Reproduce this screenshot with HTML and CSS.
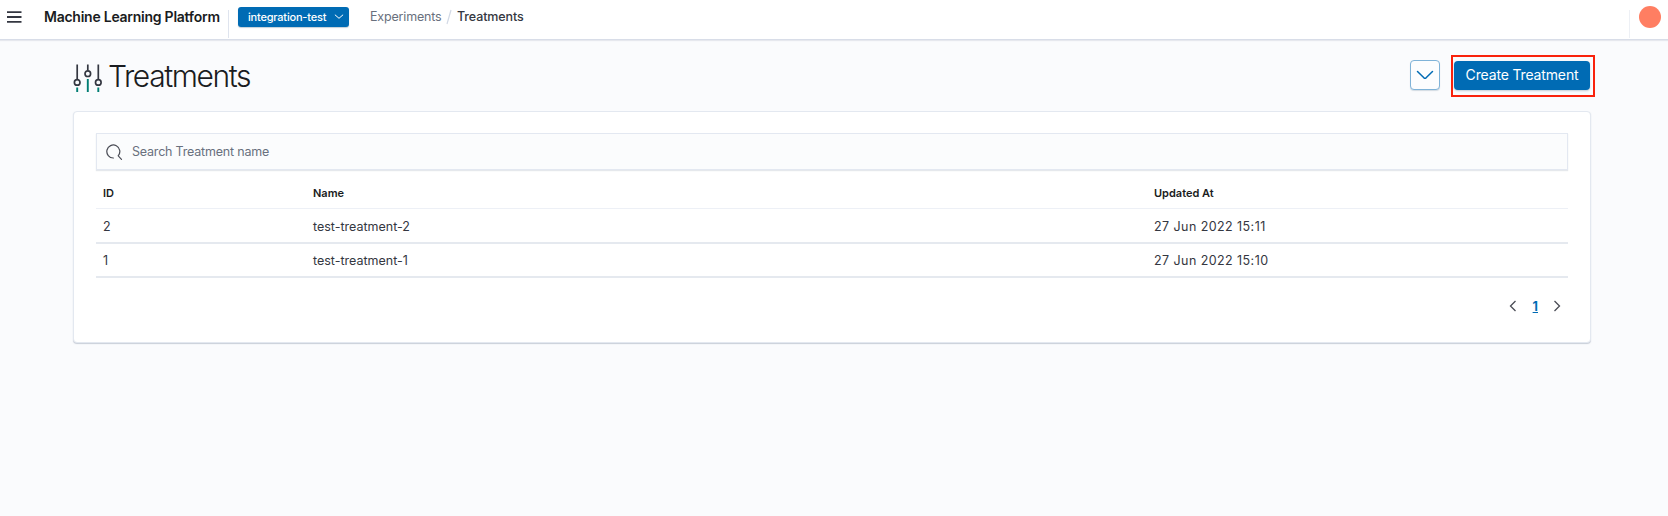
FILE: index.html
```html
<!DOCTYPE html>
<html lang="en">
<head>
<meta charset="utf-8">
<title>Treatments</title>
<link rel="stylesheet" href="styles.css">
</head>
<body>
<header class="topbar">
  <svg class="menu" width="16" height="14" viewBox="0 0 16 14" stroke="#343741" stroke-width="1.8"><path d="M1 2.2h14.5M1 7h14.5M1 11.8h14.5"/></svg>
  <span class="brand">Machine Learning Platform</span>
  <span class="divider divider-left"></span>
  <button class="project"><span class="project-name">integration-test</span>
    <svg class="project-arrow" width="10" height="6" viewBox="0 0 10 6" fill="none" stroke="#fff" stroke-linecap="round"><path d="M1.200 1L5 4.300 8.800 1"/></svg>
  </button>
  <nav class="crumbs">
    <span class="crumb">Experiments</span>
    <svg class="slash" width="6" height="16" viewBox="0 0 6 16" stroke="#d3dae6" stroke-width="1.2"><path d="M1 15L5 1"/></svg>
    <span class="crumb-current">Treatments</span>
  </nav>
  <span class="divider divider-right"></span>
  <span class="avatar"></span>
</header>
<main class="page">
  <div class="page-head">
    <svg class="logo" width="30" height="30" viewBox="0 0 30 30" fill="none" stroke="#343741" stroke-width="1.7">
      <path d="M4.200 1.500v15M14.800 1.500v6M25.300 1.500v15"/>
      <circle cx="4.200" cy="19.400" r="2.800"/><circle cx="14.800" cy="10.700" r="2.800"/><circle cx="25.300" cy="19.400" r="2.800"/>
      <path stroke="#017d73" stroke-width="1.900" d="M4.200 24.500v4.500M14.800 16v13M25.300 24.500v4.500"/>
    </svg>
    <h1 class="title">Treatments</h1>
    <button class="more"><svg width="18" height="10" viewBox="0 0 18 10" fill="none" stroke="#006bb4" stroke-width="1.500" stroke-linecap="round" stroke-linejoin="round"><path d="M1.500 1.500L7.900 7.800q1.100.9 2.200 0L16.500 1.500"/></svg></button>
    <div class="highlight"><button class="create">Create Treatment</button></div>
  </div>
  <section class="panel">
    <div class="search">
      <svg width="17" height="17" viewBox="0 0 17 17" fill="none" stroke="#4a4c55" stroke-width="1.200" stroke-linecap="round"><path d="M7.400 14A6.500 6.500 0 1 1 12.200 11.800L15.500 15.300"/></svg>
      <span class="placeholder">Search Treatment name</span>
    </div>
    <div class="row row-head"><span>ID</span><span>Name</span><span>Updated At</span></div>
    <div class="row"><span>2</span><span>test-treatment-2</span><span class="date">27 Jun 2022 15:11</span></div>
    <div class="row"><span>1</span><span>test-treatment-1</span><span class="date">27 Jun 2022 15:10</span></div>
    <div class="pager">
      <svg width="8" height="12" viewBox="0 0 8 12" fill="none" stroke="#4a4c55" stroke-width="1.300"><path d="M6.500 1L1.500 6l5 5"/></svg>
      <a class="page-number">1</a>
      <svg width="8" height="12" viewBox="0 0 8 12" fill="none" stroke="#4a4c55" stroke-width="1.300"><path d="M1.500 1l5 5-5 5"/></svg>
    </div>
  </section>
</main>
</body>
</html>
```
FILE: styles.css
```css
* { box-sizing: border-box; }
body {
  margin: 0;
  min-height: 516px;
  background: #fafbfd;
  color: #343741;
  font: 12.500px/20px Inter, "Liberation Sans", sans-serif;
}
button { font: inherit; padding: 0; cursor: pointer; }
svg { display: block; flex: none; }
.topbar {
  display: flex;
  align-items: flex-start;
  height: 40px;
  padding: 7px 7px 0 6px;
  background: #fff;
  border-bottom: 1px solid #d8dde8;
  box-shadow: 0 1px 1px rgba(152, 162, 179, .2);
  white-space: nowrap;
}
.menu { margin-top: 3px; }
.brand {
  width: 183px;
  margin-left: 22px;
  color: #1a1c21;
  font-size: 14px;
  font-weight: 600;
  letter-spacing: -.25px;
}
.divider { width: 1px; height: 28px; margin-top: 3px; background: #dfe4ee; }
.divider-left { margin-left: 1px; }
.divider-right { margin-left: auto; background: #edf0f5; }
.project {
  display: flex;
  align-items: center;
  justify-content: space-between;
  width: 111px;
  height: 20px;
  margin-left: 9px;
  padding: 0 5px 1px 10px;
  border: 0;
  border-radius: 3px;
  background: #006bb4;
  box-shadow: 0 1px 1px rgba(54, 97, 126, .3);
  color: #fff;
  font-size: 11px;
  font-weight: 500;
  letter-spacing: -.2px;
}
.project-arrow { margin-top: 1px; }
.crumbs { display: flex; margin-left: 21px; letter-spacing: -.17px; }
.crumb { width: 72px; color: #69707d; }
.slash { margin: 2px 5px 0 4px; }
.crumb-current { font-weight: 500; letter-spacing: -.1px; }
.avatar { width: 22px; height: 22px; margin: -1px 0 0 9px; border-radius: 50%; background: #ff7e62; }
.page { width: 1518px; margin: 15px 0 0 73px; }
.page-head { display: flex; align-items: flex-start; height: 56px; margin-right: -4px; }
.logo { margin-top: 8px; }
.title {
  margin: 1px auto 0 5px;
  color: #1a1c21;
  font-size: 30px;
  font-weight: 340;
  line-height: 40px;
  letter-spacing: -1.400px;
}
.more {
  display: grid;
  place-items: center;
  width: 30px;
  height: 30px;
  margin: 5px 11px 0 0;
  border: 1px solid #7fb3d8;
  border-radius: 4px;
  background: #fcfdfe;
  box-shadow: 0 1px 1px rgba(54, 97, 126, .2);
}
.highlight { width: 144px; height: 42px; padding: 4px 3px 0 1px; border: 2px solid #f9220c; }
.create {
  display: block;
  width: 136px;
  height: 29px;
  padding: 0 0 1px;
  border: 0;
  border-radius: 4px;
  background: #006bb4;
  box-shadow: 0 1px 2px rgba(54, 97, 126, .3);
  color: #fff;
  font-size: 14px;
  letter-spacing: -.15px;
  white-space: nowrap;
}
.panel {
  height: 232px;
  padding: 21px 22px;
  border: 1px solid #e3e8f0;
  border-radius: 4px;
  background: #fff;
  box-shadow: 0 1px 1px rgba(152, 162, 179, .5);
}
.search {
  display: flex;
  align-items: center;
  height: 37px;
  padding: 1px 0 0 9px;
  border: 1px solid #e3e8f1;
  background: #fbfcfd;
  box-shadow: 0 1px 1px rgba(152, 162, 179, .25);
}
.placeholder { margin-left: 9px; color: #69707d; letter-spacing: -.2px; }
.row {
  display: grid;
  grid-template-columns: 210px 841px 1fr;
  align-items: center;
  height: 34px;
  padding: 1px 0 0 7px;
  border-bottom: 2px solid #e5e9ef;
}
.row-head {
  height: 39px;
  padding-top: 8px;
  margin-bottom: 1px;
  border-bottom: 1px solid #edf0f6;
  color: #1a1c21;
  font-size: 11px;
  font-weight: 600;
}
.date { letter-spacing: .43px; }
.pager { display: flex; align-items: center; justify-content: flex-end; margin: 17px 7px 0 0; }
.page-number { margin: 2px 15px 0 16px; color: #006bb4; font-weight: 700; text-decoration: underline; }
```
